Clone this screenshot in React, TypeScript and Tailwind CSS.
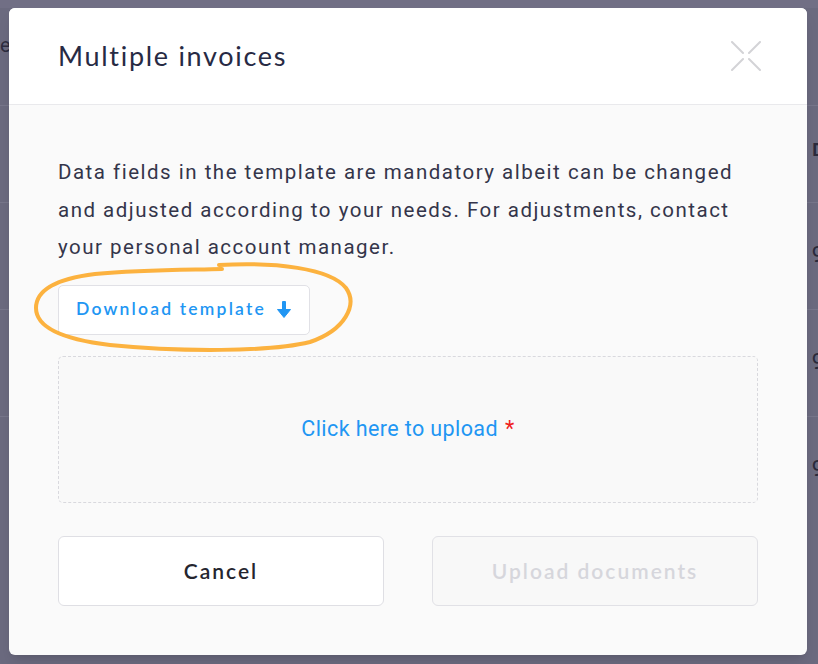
import React from "react";

const rows = ["9", "9", "9"];

const CloseIcon = () => (
  <svg width="30" height="30" viewBox="0 0 30 30" fill="none" stroke="#d3d3d6" strokeWidth="2" strokeLinecap="round">
    <line x1="1" y1="1" x2="12" y2="12" />
    <line x1="18" y1="18" x2="29" y2="29" />
    <line x1="29" y1="1" x2="18" y2="12" />
    <line x1="12" y1="18" x2="1" y2="29" />
  </svg>
);

const ArrowDown = () => (
  <svg width="14" height="17" viewBox="0 0 14 17" fill="#2196f3">
    <rect x="5" y="0" width="4" height="10" rx="1" />
    <path d="M0.5 8.5 L13.5 8.5 L7 16.5 Z" strokeLinejoin="round" stroke="#2196f3" strokeWidth="1" />
  </svg>
);

export default function App() {
  return (
    <div className="relative w-[818px] h-[664px] overflow-hidden bg-[#6b6a7f]">
      {/* page behind the overlay */}
      <div className="absolute inset-0 flex flex-col pt-[97px] border-t-[8px] border-[#716f85]" style={{ fontFamily: "Roboto, sans-serif" }}>
        <div className="absolute left-0 top-[22px] text-[20px] text-[#2e2d40]">e</div>
        <div className="h-[97px] border-t border-[#77768b] flex justify-end items-start pt-[30px]">
          <span className="text-[18px] font-bold text-[#2b2a3c] -mr-[6px]">D</span>
        </div>
        {rows.map((r, i) => (
          <div key={i} className="h-[107px] border-t border-[#77768b] flex justify-end items-center pb-[4px]">
            <span className="text-[22px] text-[#2b2a3c] -mr-[6px]">{r}</span>
          </div>
        ))}
      </div>

      <div className="relative pt-[8px] pl-[9px]">
        <div className="w-[798px] h-[647px] rounded-md overflow-hidden bg-[#fafafa] shadow-lg">
          <div className="h-[97px] bg-white border-b border-[#e9e9ec] flex items-center justify-between pl-[49px] pr-[46px]">
            <h1
              className="text-[27px] text-[#272a44] tracking-[1.7px]"
              style={{ fontFamily: "Lato, sans-serif" }}
            >
              Multiple invoices
            </h1>
            <CloseIcon />
          </div>

          <div className="px-[49px] pt-[49px]">
            <p
              className="text-[20.5px] leading-[37.5px] text-[#34354a] tracking-[1.5px]"
              style={{ fontFamily: "Roboto, sans-serif" }}
            >
              Data fields in the template are mandatory albeit can be changed and adjusted according to your needs. For adjustments, contact your personal account manager.
            </p>

            <button
              className="mt-[18px] h-[50px] w-[252px] flex items-center gap-[11px] pl-[17px] bg-white border border-[#e1e1e6] rounded-[5px] text-[17.5px] font-semibold text-[#2196f3] tracking-[2.2px]"
              style={{ fontFamily: "Lato, sans-serif" }}
            >
              Download template
              <ArrowDown />
            </button>

            <div
              className="mt-[21px] h-[147px] flex items-center justify-center border border-dashed border-[#d9d9de] rounded-[5px] bg-[#f9f9f9] text-[21.5px] text-[#2196f3] tracking-[0.4px]"
              style={{ fontFamily: "Roboto, sans-serif" }}
            >
              Click here to upload<span className="ml-[7px] text-[#f01e1e]">*</span>
            </div>

            <div className="mt-[33px] flex gap-[48px]" style={{ fontFamily: "Lato, sans-serif" }}>
              <button className="flex-1 h-[70px] bg-white border border-[#dfdfe4] rounded-[6px] text-[21px] font-semibold text-[#25252f] tracking-[2px]">
                Cancel
              </button>
              <button className="flex-1 h-[70px] bg-[#f8f8f8] border border-[#e1e1e6] rounded-[6px] text-[21px] font-semibold text-[#d6d6dc] tracking-[2px]">
                Upload documents
              </button>
            </div>
          </div>
        </div>
      </div>

      {/* hand drawn highlight */}
      <svg className="absolute inset-0 pointer-events-none" width="818" height="664" viewBox="0 0 818 664" fill="none">
        <path
          d="M219 265 C 275 262, 330 268, 346 288 C 358 305, 345 330, 310 342 C 270 352, 180 352, 110 345 C 60 339, 36 326, 36 308 C 36 290, 55 279, 95 274 C 140 270, 185 270, 222 269"
          stroke="#fcb23f"
          strokeWidth="4"
          strokeLinecap="round"
          strokeLinejoin="round"
        />
      </svg>
    </div>
  );
}
